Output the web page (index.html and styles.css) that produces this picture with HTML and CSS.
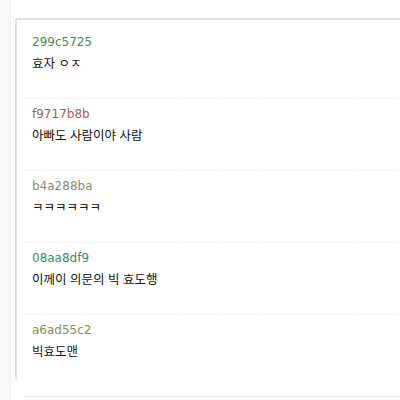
FILE: index.html
```html
<!DOCTYPE html>
<html lang="ko">
<head>
    <meta charset="UTF-8">
    <title>Comments</title>
    <link rel="stylesheet" href="styles.css">
</head>
<body>
    <div class="layout">
        <div class="gutter"></div>
        <div class="main">
            <!-- Lista de comentarios -->
            <div class="comment-box">
                <div class="comment">
                    <div class="comment-id id-green">299c5725</div>
                    <div class="comment-text">효자 ㅇㅈ</div>
                </div>
                <div class="comment">
                    <div class="comment-id id-red">f9717b8b</div>
                    <div class="comment-text">아빠도 사람이야 사람</div>
                </div>
                <div class="comment">
                    <div class="comment-id id-gray">b4a288ba</div>
                    <div class="comment-text">ㅋㅋㅋㅋㅋㅋ</div>
                </div>
                <div class="comment">
                    <div class="comment-id id-teal">08aa8df9</div>
                    <div class="comment-text">이께이 의문의 빅 효도행</div>
                </div>
                <div class="comment last">
                    <div class="comment-id id-olive">a6ad55c2</div>
                    <div class="comment-text">빅효도맨</div>
                </div>
            </div>
            <div class="next-box"></div>
        </div>
    </div>
</body>
</html>
```

FILE: styles.css
```css
body { margin: 0; background: #fff; font-family: "DejaVu Sans", sans-serif; font-size: 12px; }
.layout { display: flex; min-height: 400px; }
.gutter {
    width: 10px; background: #f7f7f7; border-right: 1px solid #efefef;
}
.main { flex: 1; padding-left: 4px; }
.comment-box {
    margin-top: 18px;
    border-top: 2px solid #dfe3da;
    border-left: 2px solid #e2e5dd;
    padding-top: 7px;
}
.comment {
    margin-left: 8px;
    padding: 7px 0 27px 7px;
    border-bottom: 1px dashed #ebebeb;
}
.comment.last { border-bottom: none; padding-bottom: 21px; }
.comment-id { line-height: 16px; font-size: 12px; }
.comment-text {
    margin-top: 5px; line-height: 16px; color: #111;
    font-family: "Noto Sans CJK KR", sans-serif; font-size: 12.5px;
}
.id-green { color: #4c8a5c; }
.id-red { color: #a5605c; }
.id-gray { color: #8a8c74; }
.id-teal { color: #3c8a68; }
.id-olive { color: #8a8c58; }
.next-box {
    margin: 16px 0 0 10px;
    border-top: 1px solid #ececec;
    height: 20px;
}
```
